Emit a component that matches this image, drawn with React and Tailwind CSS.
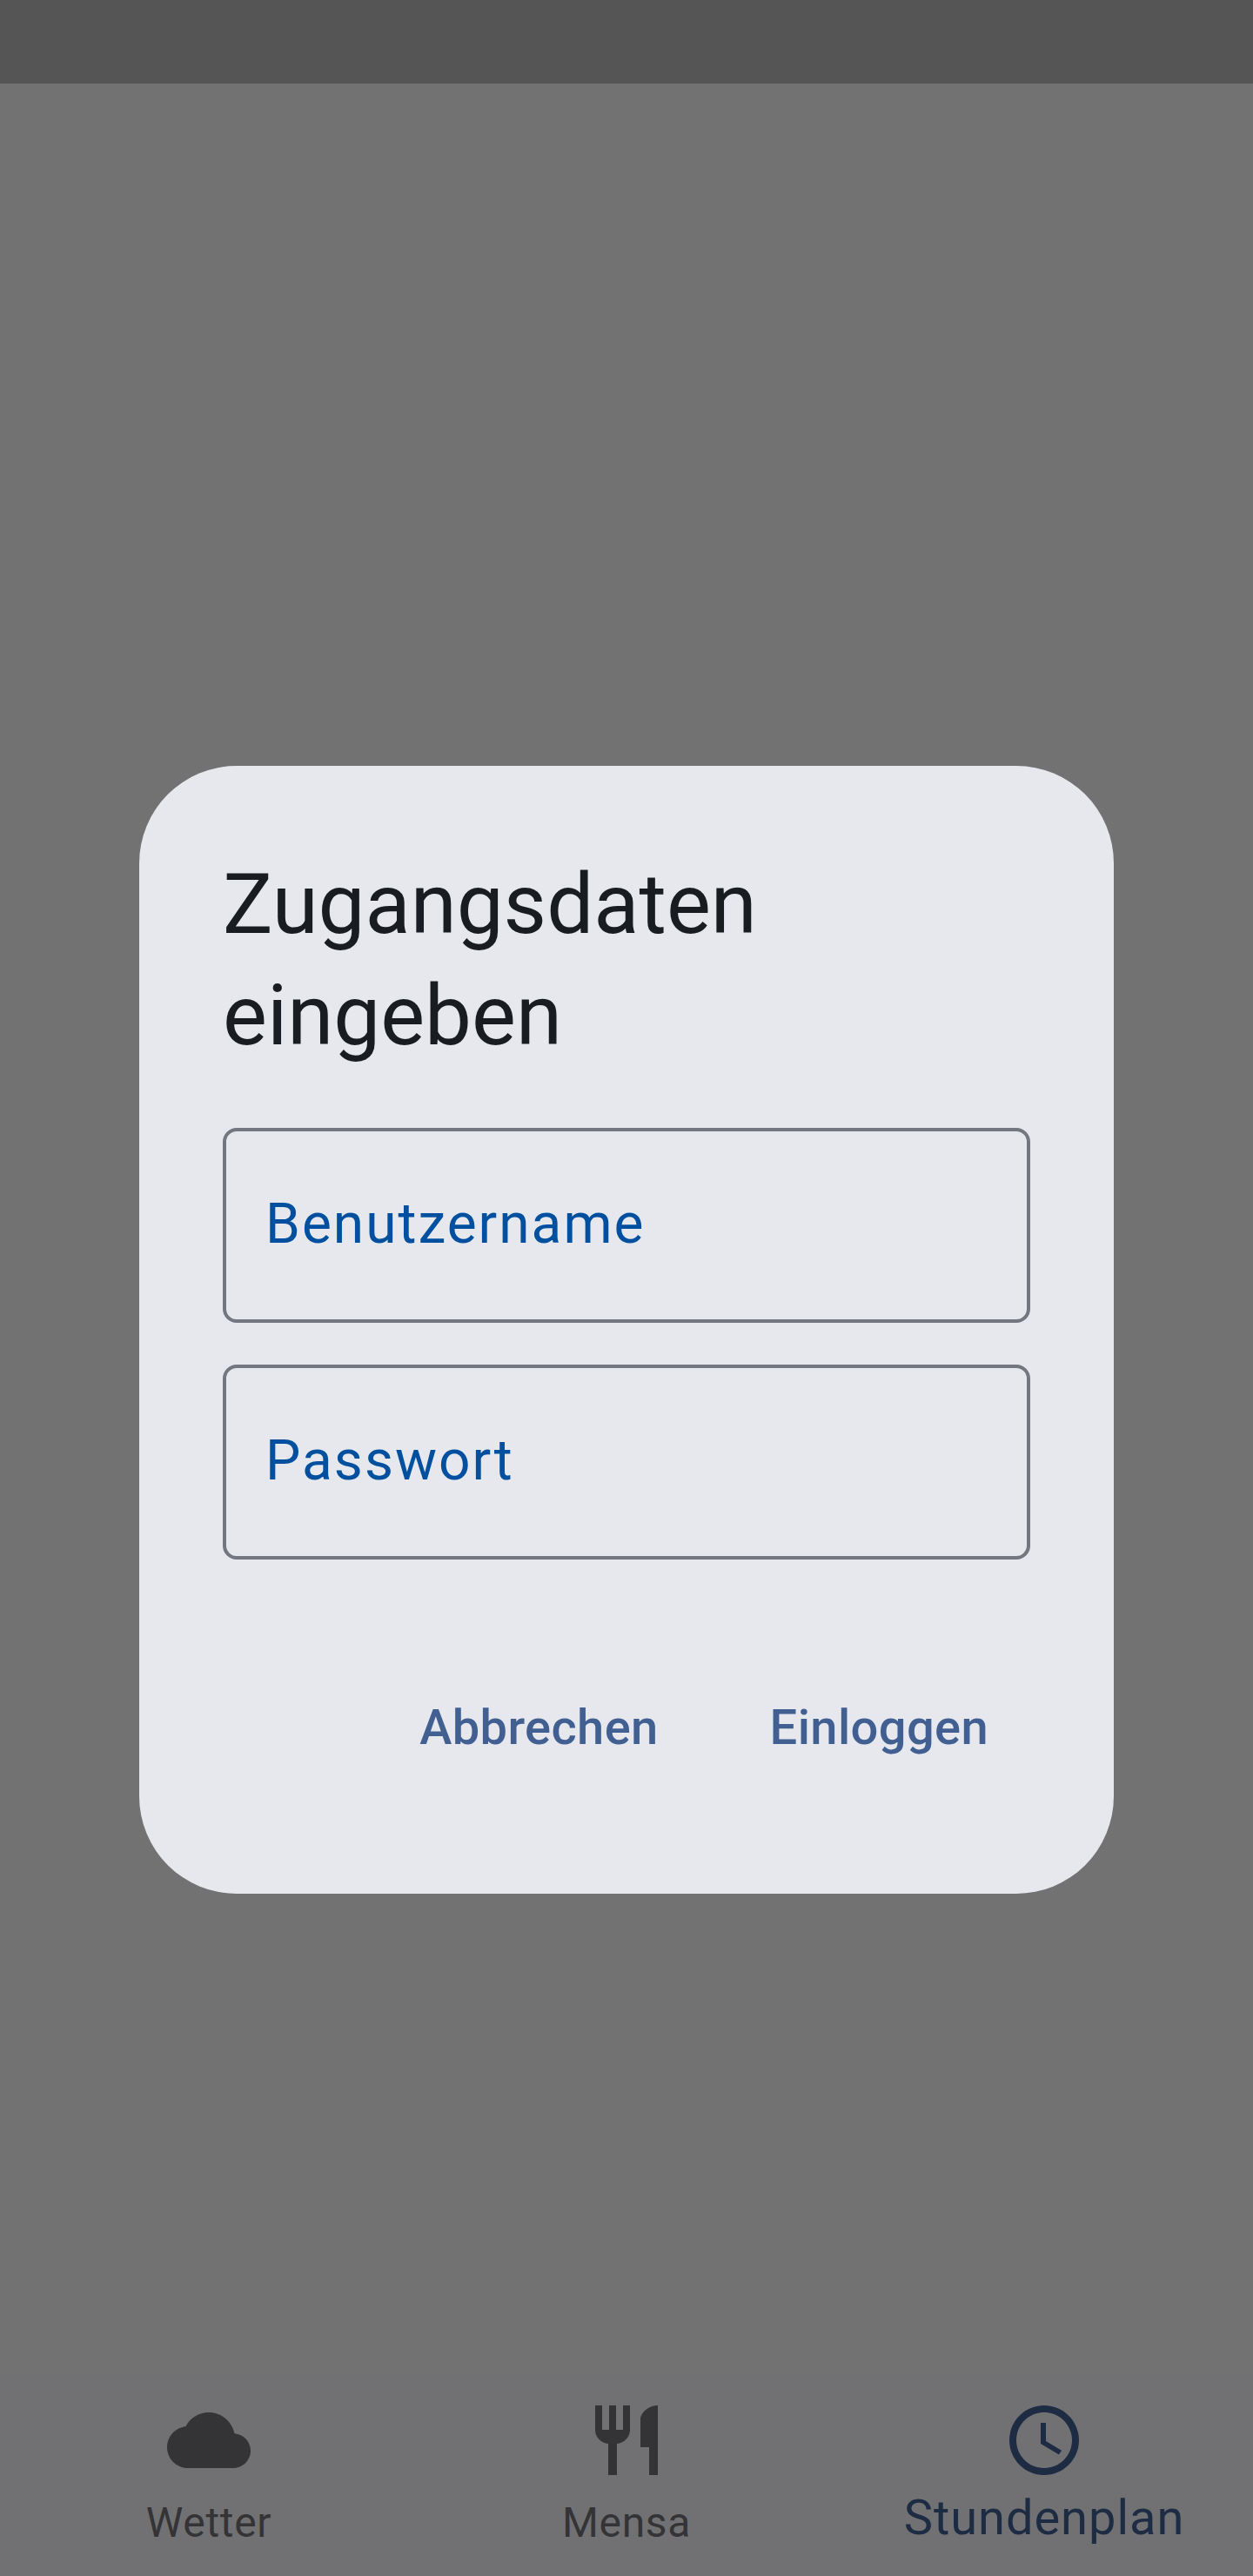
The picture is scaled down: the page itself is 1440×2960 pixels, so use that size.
import React from "react";

const tabs = [
  {
    label: "Wetter",
    path: "M19.35 10.04C18.67 6.59 15.64 4 12 4 9.11 4 6.6 5.64 5.35 8.04 2.34 8.36 0 10.91 0 14c0 3.31 2.69 6 6 6h13c2.76 0 5-2.24 5-5 0-2.64-2.05-4.78-4.65-4.96z",
  },
  {
    label: "Mensa",
    path: "M11 9H9V2H7v7H5V2H3v7c0 2.12 1.66 3.84 3.75 3.97V22h2.5v-9.03C11.34 12.84 13 11.12 13 9V2h-2v7zm5-3v8h2.5v8H21V2c-2.76 0-5 2.24-5 4z",
  },
  {
    label: "Stundenplan",
    active: true,
    path: "M11.99 2C6.47 2 2 6.48 2 12s4.47 10 9.99 10C17.52 22 22 17.52 22 12S17.52 2 11.99 2zM12 20c-4.42 0-8-3.58-8-8s3.58-8 8-8 8 3.58 8 8-3.58 8-8 8zm.5-13H11v6l5.25 3.15.75-1.23-4.5-2.67V7z",
  },
];

function Tab({ label, path, active }) {
  return (
    <div className={active ? "flex flex-col items-center pt-[28px] text-[#1d2b43]" : "flex flex-col items-center pt-[28px] text-[#343436]"}>
      <svg className="block fill-current" width="96" height="96" viewBox="0 0 24 24">
        <path d={path} />
      </svg>
      <span
        className={
          active
            ? "mt-[8px] text-[56px] leading-[66px] tracking-[0.96px]"
            : "mt-[18px] text-[48px] leading-[57px] tracking-[0.67px]"
        }
      >
        {label}
      </span>
    </div>
  );
}

function Field({ label }) {
  return (
    <div className="flex h-[224px] items-center rounded-[16px] border-4 border-[#74777f] pb-[3px] pl-[45px]">
      <span className="text-[64px] leading-[75px] tracking-[2px] text-[#00509f]">{label}</span>
    </div>
  );
}

export default function App() {
  return (
    <div className="flex h-[2960px] w-[1440px] flex-col bg-[#727272] font-['Roboto',sans-serif]">
      <div className="h-[96px] bg-[#555555]" />
      <main className="flex h-[2632px] items-start justify-center pt-[784px]">
        <section className="flex h-[1296px] w-[1120px] flex-col rounded-[112px] bg-[#e7e8ee] px-[96px] pt-[95px]">
          <h1 className="text-[96px] leading-[128px] text-[#191c20]">
            Zugangsdaten
            <br />
            eingeben
          </h1>
          <div className="mt-[65px] flex flex-col gap-[48px]">
            <Field label="Benutzername" />
            <Field label="Passwort" />
          </div>
          <div className="mt-[160px] flex justify-end gap-[128px] pr-[48px] text-[56px] font-medium leading-[66px] tracking-[0.4px] text-[#415f91]">
            <button>Abbrechen</button>
            <button>Einloggen</button>
          </div>
        </section>
      </main>
      <nav className="grid h-[232px] grid-cols-3 bg-[#717173]">
        {tabs.map((tab) => (
          <Tab key={tab.label} {...tab} />
        ))}
      </nav>
    </div>
  );
}
